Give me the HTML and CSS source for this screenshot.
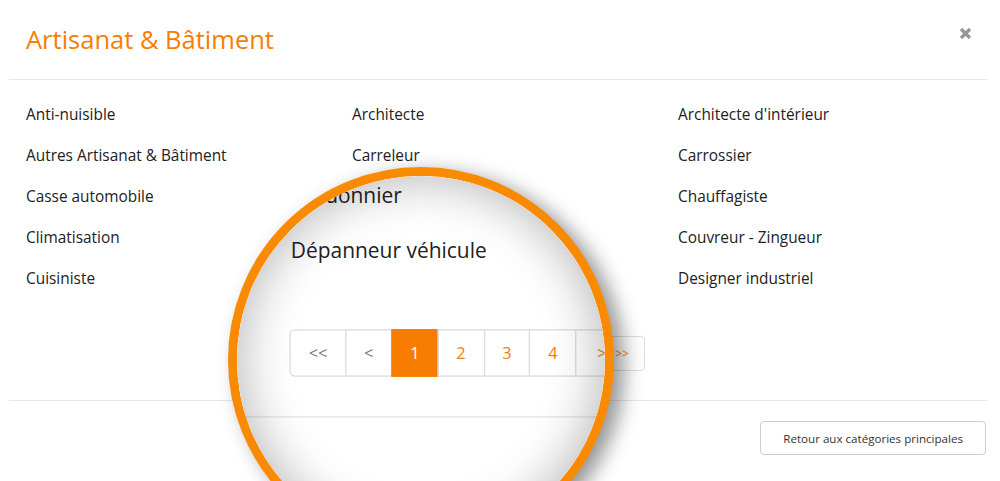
FILE: index.html
```html
<!DOCTYPE html>
<html lang="fr">
<head>
<meta charset="utf-8">
<title>Artisanat &amp; Bâtiment</title>
<link rel="stylesheet" href="styles.css">
</head>
<body>
<div class="page">
  <div class="modal">
    <div class="modal-header">
      <h2 class="title">Artisanat &amp; Bâtiment</h2>
      <svg class="close" viewBox="0 0 13 13" width="13" height="13"><path d="M2 2 L11 11 M11 2 L2 11" stroke="#979797" stroke-width="3.4" stroke-linecap="butt"/></svg>
    </div>
    <div class="modal-body">
      <ul class="cats">
        <li>Anti-nuisible</li><li>Architecte</li><li>Architecte d'intérieur</li>
        <li>Autres Artisanat &amp; Bâtiment</li><li>Carreleur</li><li>Carrossier</li>
        <li>Casse automobile</li><li>Charpentier</li><li>Chauffagiste</li>
        <li>Climatisation</li><li>Cordonnier</li><li>Couvreur - Zingueur</li>
        <li>Cuisiniste</li><li>Dépanneur véhicule</li><li>Designer industriel</li>
      </ul>
      <div class="pager">
        <a class="pg off first">&lt;&lt;</a><a class="pg off">&lt;</a><a class="pg active">1</a><a class="pg">2</a><a class="pg">3</a><a class="pg">4</a><a class="pg wide">&gt;</a><a class="pg wide last">&gt;&gt;</a>
      </div>
    </div>
    <div class="modal-footer">
      <button class="btn">Retour aux catégories principales</button>
    </div>
  </div>

  <div class="lens" aria-hidden="true">
    <div class="lens-view">
      <div class="modal">
        <div class="modal-header">
          <h2 class="title">Artisanat &amp; Bâtiment</h2>
          <svg class="close" viewBox="0 0 13 13" width="13" height="13"><path d="M2 2 L11 11 M11 2 L2 11" stroke="#979797" stroke-width="3.4" stroke-linecap="butt"/></svg>
        </div>
        <div class="modal-body">
          <ul class="cats">
            <li>Anti-nuisible</li><li>Architecte</li><li>Architecte d'intérieur</li>
            <li>Autres Artisanat &amp; Bâtiment</li><li>Carreleur</li><li>Carrossier</li>
            <li>Casse automobile</li><li>Charpentier</li><li>Chauffagiste</li>
            <li>Climatisation</li><li>Cordonnier</li><li>Couvreur - Zingueur</li>
            <li>Cuisiniste</li><li>Dépanneur véhicule</li><li>Designer industriel</li>
          </ul>
          <div class="pager">
            <a class="pg off first">&lt;&lt;</a><a class="pg off">&lt;</a><a class="pg active">1</a><a class="pg">2</a><a class="pg">3</a><a class="pg">4</a><a class="pg wide">&gt;</a><a class="pg wide last">&gt;&gt;</a>
          </div>
        </div>
        <div class="modal-footer">
          <button class="btn">Retour aux catégories principales</button>
        </div>
      </div>
    </div>
    <div class="lens-shade"></div>
  </div>
</div>
</body>
</html>
```
FILE: styles.css
```css
html, body {
  margin: 0;
  padding: 0;
  background: #fff;
}
body {
  font-family: "Open Sans", "Noto Sans", sans-serif;
  color: #222;
  overflow: hidden;
}
.page {
  position: relative;
  width: 1000px;
  height: 481px;
  overflow: hidden;
}
.modal {
  margin-left: 9px;
  width: 978px;
}
.modal-header {
  display: flex;
  justify-content: space-between;
  align-items: flex-start;
  padding: 26px 15px 26px 17px;
  border-bottom: 1px solid #e6e6e6;
}
.title {
  margin: 0;
  font-size: 25.5px;
  line-height: 27px;
  font-weight: 400;
  color: #f67d06;
}
.close {
  display: block;
  margin-top: 1px;
}
.modal-body {
  padding: 24px 0 29px;
  border-bottom: 1px solid #e6e6e6;
}
.cats {
  display: grid;
  grid-template-columns: repeat(3, 326px);
  row-gap: 20px;
  list-style: none;
  margin: 0;
  padding: 0;
}
.cats li {
  padding-left: 17px;
  font-size: 15.4px;
  line-height: 21px;
  color: #222;
  white-space: nowrap;
}
.pager {
  display: flex;
  justify-content: center;
  margin-top: 47px;
}
.pg {
  display: flex;
  align-items: center;
  justify-content: center;
  box-sizing: border-box;
  height: 35px;
  min-width: 34px;
  padding: 0 13px;
  margin-left: -1px;
  border: 1px solid #dddddd;
  background: #fff;
  font-size: 12px;
  color: #f67d06;
}
.pg.wide {
  padding: 0 15px;
}
.pg.off {
  color: #777;
}
.pg.first {
  margin-left: 0;
  border-radius: 4px 0 0 4px;
}
.pg.last {
  border-radius: 0 4px 4px 0;
}
.pg.active {
  background: #f67d00;
  border-color: #f67d00;
  color: #fff;
}
.modal-footer {
  display: flex;
  justify-content: flex-end;
  padding: 20px 1px 0 0;
}
.btn {
  height: 34px;
  box-sizing: border-box;
  padding: 0 22px;
  border: 1px solid #cccccc;
  border-radius: 4px;
  background: #fff;
  font-family: "Open Sans", "Noto Sans", sans-serif;
  font-size: 11.6px;
  color: #333;
}

/* magnifier overlay */
.lens {
  position: absolute;
  left: 228px;
  top: 167px;
  width: 386px;
  height: 386px;
  box-sizing: border-box;
  border: 9px solid #f98a03;
  border-radius: 50%;
  overflow: hidden;
  background: #fff;
  box-shadow: 10px 6px 20px rgba(0, 0, 0, 0.42);
  z-index: 5;
}
.lens-view {
  position: absolute;
  left: -237px;
  top: -176px;
  width: 1000px;
  height: 481px;
  background: #fff;
  transform-origin: 522px 355px;
  transform: scale(1.36);
}
.lens-shade {
  position: absolute;
  inset: 0;
  border-radius: 50%;
  box-shadow: inset 0 0 50px 4px rgba(0, 0, 0, 0.28);
}
```
